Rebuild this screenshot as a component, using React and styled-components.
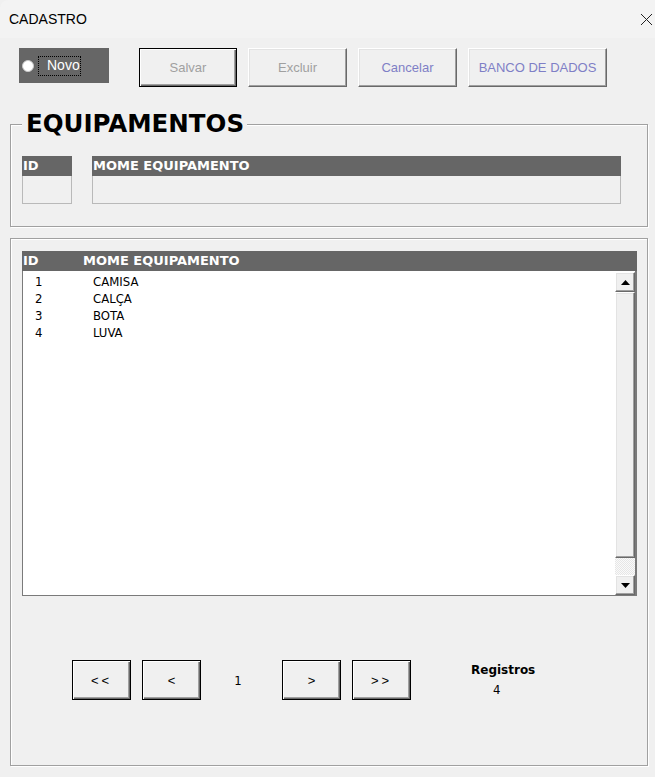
import styled, { createGlobalStyle, css } from "styled-components";

const GlobalStyle = createGlobalStyle`
  html, body {
    margin: 0;
    padding: 0;
    background: #f0f0f0;
  }
  body {
    font-family: "Liberation Sans", Arial, sans-serif;
    color: #000;
  }
  * {
    box-sizing: border-box;
  }
`;

const Window = styled.div`
  width: 655px;
  height: 777px;
  overflow: hidden;
  background: #f0f0f0;
  border-top-left-radius: 8px;
`;

const TitleBar = styled.div`
  height: 38px;
  display: flex;
  align-items: center;
  justify-content: space-between;
  padding: 0 2px 0 9px;
  background: #f3f3f3;
  font-size: 14px;
  border-top-left-radius: 8px;
`;

const CloseIcon = () => (
  <svg width="13" height="13" viewBox="0 0 13 13">
    <path d="M1 1 L12 12 M12 1 L1 12" stroke="#222" strokeWidth="1" fill="none" />
  </svg>
);

const Toolbar = styled.div`
  display: flex;
  align-items: flex-start;
  gap: 11px;
  margin-top: 10px;
  padding-left: 19px;
`;

const NovoBox = styled.div`
  width: 90px;
  height: 35px;
  background: #666666;
  display: flex;
  align-items: center;
  gap: 4px;
  padding-left: 3px;
  margin-right: 19px;
`;

const Radio = styled.span`
  width: 12px;
  height: 12px;
  border-radius: 50%;
  background: #fff;
  border: 1px solid #c8c8c8;
`;

const NovoLabel = styled.span`
  color: #fff;
  font-size: 14px;
  height: 20px;
  line-height: 18px;
  padding: 0 1px 0 9px;
  outline: 1px dotted #000;
  outline-offset: -1px;
`;

const raised = css`
  background: #f0f0f0;
  border: 1px solid;
  border-color: #ffffff #696969 #696969 #ffffff;
  box-shadow: inset -1px -1px 0 #a0a0a0, inset 1px 1px 0 #e3e3e3;
`;

const defaultRaised = css`
  background: #f0f0f0;
  border: 1px solid #000;
  box-shadow: inset 1px 1px 0 #fff, inset -1px -1px 0 #696969, inset -2px -2px 0 #a0a0a0;
`;

const Button = styled.button`
  ${p => (p.$default ? defaultRaised : raised)};
  width: ${p => p.$w || 99}px;
  height: ${p => p.$h || 39}px;
  font-family: "Liberation Sans", Arial, sans-serif;
  font-size: 13px;
  letter-spacing: ${p => p.$spacing || 0}px;
  color: ${p => p.$color || "#000"};
  padding: 0;
  cursor: default;
`;

const Fieldset = styled.fieldset`
  margin: 24px 0 0 10px;
  width: 638px;
  border: 1px solid #a0a0a0;
  box-shadow: 1px 1px 0 #fff, inset 1px 1px 0 #fff;
  padding: 19px 0 22px 11px;
  min-width: 0;
`;

const Legend = styled.legend`
  font-family: "DejaVu Sans", Verdana, sans-serif;
  font-weight: bold;
  font-size: 24.5px;
  line-height: 26px;
  margin: 0;
  padding: 0 3px 0 4px;
  background: #f0f0f0;
`;

const FieldRow = styled.div`
  display: flex;
  gap: 20px;
`;

const Field = styled.div`
  width: ${p => p.$w}px;
  display: flex;
  flex-direction: column;
`;

const HeadCell = styled.div`
  height: 20px;
  background: #666666;
  color: #fff;
  font-family: "DejaVu Sans", Verdana, sans-serif;
  font-weight: bold;
  font-size: 13px;
  line-height: 20px;
  padding-left: 1px;
  white-space: nowrap;
`;

const InputBox = styled.div`
  height: 28px;
  border: 1px solid #b9b9b9;
  border-top: none;
  background: #f0f0f0;
`;

const Frame = styled.div`
  margin: 11px 0 0 10px;
  width: 638px;
  height: 528px;
  border: 1px solid #a0a0a0;
  box-shadow: 1px 1px 0 #fff, inset 1px 1px 0 #fff;
  padding: 12px 10px 0 11px;
`;

const ListHeader = styled.div`
  display: grid;
  grid-template-columns: 60px 1fr;
  height: 20px;
  background: #666666;
  color: #fff;
  font-family: "DejaVu Sans", Verdana, sans-serif;
  font-weight: bold;
  font-size: 13px;
  line-height: 20px;
  padding-left: 1px;
`;

const ListBox = styled.div`
  height: 325px;
  background: #fff;
  border-left: 1px solid #7a7a7a;
  border-bottom: 1px solid #7a7a7a;
  display: flex;
`;

const Rows = styled.div`
  flex: 1;
  padding-top: 2px;
`;

const Row = styled.div`
  display: grid;
  grid-template-columns: 70px 1fr;
  height: 17px;
  line-height: 17px;
  font-family: "DejaVu Sans Condensed", "DejaVu Sans", sans-serif;
  font-stretch: condensed;
  font-size: 13px;
  span:first-child {
    padding-left: 12px;
  }
`;

const ScrollBar = styled.div`
  width: 22px;
  display: flex;
  flex-direction: column;
  border-right: 2px solid #7a7a7a;
  padding-top: 1px;
`;

const ScrollBtn = styled.div`
  height: 20px;
  ${raised};
  display: flex;
  align-items: center;
  justify-content: center;
`;

const Thumb = styled.div`
  flex: 1;
  ${raised};
`;

const Track = styled.div`
  height: 17px;
  background-color: #f4f4f4;
  background-image: repeating-conic-gradient(#e6e6e6 0 25%, #fafafa 0 50%);
  background-size: 2px 2px;
`;

const Arrow = ({ down }) => (
  <svg width="9" height="5" viewBox="0 0 9 5">
    <path d={down ? "M0 0 H9 L4.5 5 Z" : "M0 5 H9 L4.5 0 Z"} fill="#000" />
  </svg>
);

const Pager = styled.div`
  display: flex;
  align-items: flex-start;
  gap: 11px;
  margin-top: 64px;
  padding-left: 50px;
`;

const PageNum = styled.div`
  width: 59px;
  padding-right: 7px;
  text-align: center;
  font-family: "DejaVu Sans Condensed", "DejaVu Sans", sans-serif;
  font-size: 13px;
  line-height: 41px;
`;

const Counter = styled.div`
  margin-left: 49px;
  display: flex;
  flex-direction: column;
  padding-top: 1px;
  font-family: "DejaVu Sans", Verdana, sans-serif;
  font-size: 12px;
`;

const CounterLabel = styled.div`
  font-weight: bold;
  line-height: 18px;
`;

const CounterValue = styled.div`
  padding-left: 22px;
  line-height: 22px;
  font-family: "DejaVu Sans Condensed", "DejaVu Sans", sans-serif;
  font-size: 13px;
`;

const items = [
  { id: 1, nome: "CAMISA" },
  { id: 2, nome: "CALÇA" },
  { id: 3, nome: "BOTA" },
  { id: 4, nome: "LUVA" },
];

export default function App() {
  return (
    <Window>
      <GlobalStyle />
      <TitleBar>
        <span>CADASTRO</span>
        <CloseIcon />
      </TitleBar>

      <Toolbar>
        <NovoBox>
          <Radio />
          <NovoLabel>Novo</NovoLabel>
        </NovoBox>
        <Button $default $w={98} $color="#a0a0a0">Salvar</Button>
        <Button $color="#a0a0a0">Excluir</Button>
        <Button $color="#7f7fc6">Cancelar</Button>
        <Button $w={139} $color="#7f7fc6">BANCO DE DADOS</Button>
      </Toolbar>

      <Fieldset>
        <Legend>EQUIPAMENTOS</Legend>
        <FieldRow>
          <Field $w={50}>
            <HeadCell>ID</HeadCell>
            <InputBox />
          </Field>
          <Field $w={529}>
            <HeadCell>MOME EQUIPAMENTO</HeadCell>
            <InputBox />
          </Field>
        </FieldRow>
      </Fieldset>

      <Frame>
        <ListHeader>
          <span>ID</span>
          <span>MOME EQUIPAMENTO</span>
        </ListHeader>
        <ListBox>
          <Rows>
            {items.map(it => (
              <Row key={it.id}>
                <span>{it.id}</span>
                <span>{it.nome}</span>
              </Row>
            ))}
          </Rows>
          <ScrollBar>
            <ScrollBtn>
              <Arrow />
            </ScrollBtn>
            <Thumb />
            <Track />
            <ScrollBtn>
              <Arrow down />
            </ScrollBtn>
          </ScrollBar>
        </ListBox>

        <Pager>
          <Button $default $w={59} $h={40} $spacing={3}>&lt;&lt;</Button>
          <Button $default $w={59} $h={40}>&lt;</Button>
          <PageNum>1</PageNum>
          <Button $default $w={59} $h={40}>&gt;</Button>
          <Button $default $w={59} $h={40} $spacing={3}>&gt;&gt;</Button>
          <Counter>
            <CounterLabel>Registros</CounterLabel>
            <CounterValue>4</CounterValue>
          </Counter>
        </Pager>
      </Frame>
    </Window>
  );
}
